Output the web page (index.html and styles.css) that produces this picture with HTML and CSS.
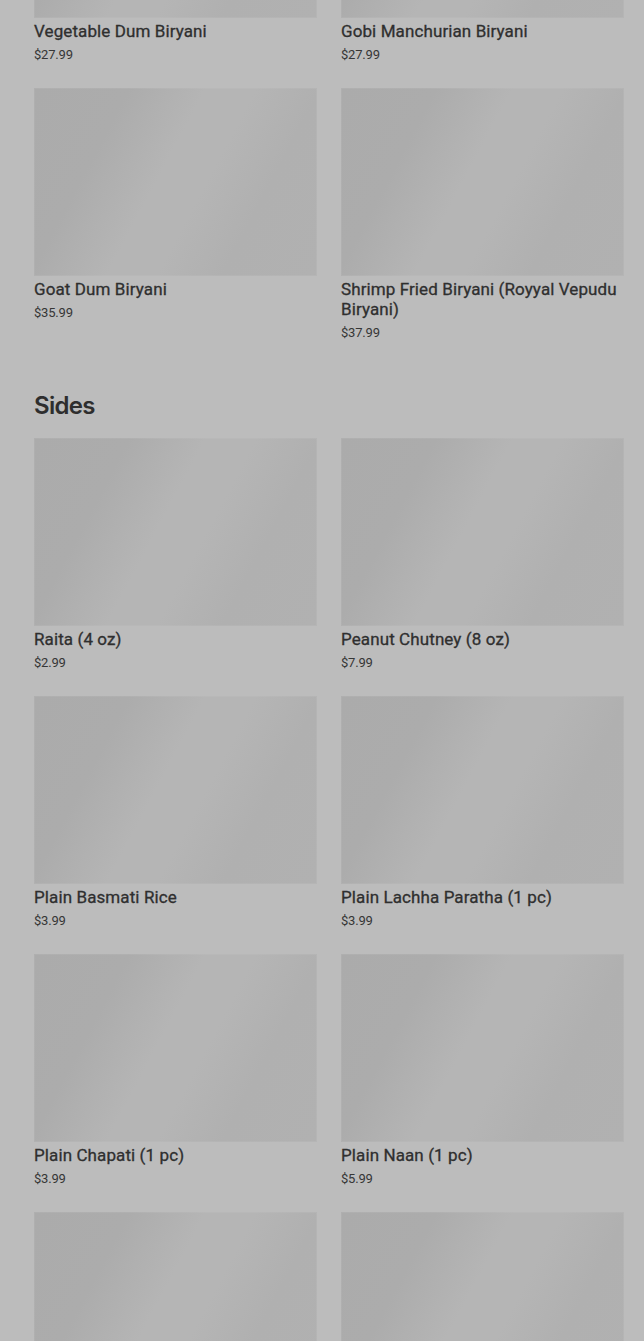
FILE: index.html
```html
<!DOCTYPE html>
<html lang="en">
<head>
<meta charset="utf-8">
<title>Menu</title>
<link rel="stylesheet" href="styles.css">
</head>
<body>
<main class="menu">
  <section class="section">
    <div class="grid">
      <article class="item"><div class="thumb"></div><h3 class="name">Vegetable Dum Biryani</h3><p class="price">$27.99</p></article>
      <article class="item"><div class="thumb"></div><h3 class="name">Gobi Manchurian Biryani</h3><p class="price">$27.99</p></article>
      <article class="item"><div class="thumb"></div><h3 class="name">Goat Dum Biryani</h3><p class="price">$35.99</p></article>
      <article class="item"><div class="thumb"></div><h3 class="name">Shrimp Fried Biryani (Royyal Vepudu Biryani)</h3><p class="price">$37.99</p></article>
    </div>
  </section>
  <section class="section">
    <h2 class="section-title">Sides</h2>
    <div class="grid">
      <article class="item"><div class="thumb"></div><h3 class="name">Raita (4 oz)</h3><p class="price">$2.99</p></article>
      <article class="item"><div class="thumb"></div><h3 class="name">Peanut Chutney (8 oz)</h3><p class="price">$7.99</p></article>
      <article class="item"><div class="thumb"></div><h3 class="name">Plain Basmati Rice</h3><p class="price">$3.99</p></article>
      <article class="item"><div class="thumb"></div><h3 class="name">Plain Lachha Paratha (1 pc)</h3><p class="price">$3.99</p></article>
      <article class="item"><div class="thumb"></div><h3 class="name">Plain Chapati (1 pc)</h3><p class="price">$3.99</p></article>
      <article class="item"><div class="thumb"></div><h3 class="name">Plain Naan (1 pc)</h3><p class="price">$5.99</p></article>
      <article class="item"><div class="thumb"></div><h3 class="name">&nbsp;</h3><p class="price">&nbsp;</p></article>
      <article class="item"><div class="thumb"></div><h3 class="name">&nbsp;</h3><p class="price">&nbsp;</p></article>
    </div>
  </section>
</main>
</body>
</html>
```

FILE: styles.css
```css
html, body {
  margin: 0;
  padding: 0;
  background: #bcbcbc;
  overflow: hidden;
}

body {
  font-family: Roboto, "Liberation Sans", Arial, sans-serif;
  color: #2e2e2e;
}

.menu {
  /* page is scrolled: the first row's images sit above the viewport */
  margin-top: -170px;
  padding: 0 20px 0 34px;
}

.section + .section {
  margin-top: 48px;
}

.section-title {
  margin: 0 0 16px;
  font-family: Inter, "Noto Sans", sans-serif;
  font-weight: 600;
  font-size: 24px;
  line-height: 32px;
  letter-spacing: -0.7px;
  color: #2e2e2e;
}

.grid {
  display: grid;
  grid-template-columns: 1fr 1fr;
  gap: 24px;
  align-items: start;
}

.item {
  display: flex;
  flex-direction: column;
}

.thumb {
  height: 188px;
  background: linear-gradient(118deg, #ababab 0%, #acacac 25%, #b5b5b5 45%, #b5b5b5 58%, #b0b0b0 75%, #b1b1b1 100%);
  box-shadow: inset 0 0 0 1px rgba(255, 255, 255, 0.05);
}

.name {
  margin: 3px 0 0;
  font-size: 17px;
  line-height: 20px;
  font-weight: 400;
  letter-spacing: 0.1px;
  -webkit-text-stroke: 0.3px currentColor;
  color: #2f2f2f;
}

.price {
  margin: 4px 0 0;
  font-size: 13px;
  line-height: 19px;
  color: #363636;
  letter-spacing: -0.2px;
}
```
